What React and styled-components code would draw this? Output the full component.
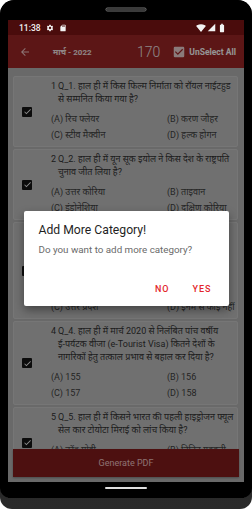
import React from "react";
import styled, { createGlobalStyle } from "styled-components";
import {
  MdArrowBack,
  MdCheckBox,
  MdCheck,
  MdSettings,
  MdSdCard,
  MdSignalWifi4Bar,
  MdSignalCellular4Bar,
  MdBatteryStd,
} from "react-icons/md";

const questions = [
  {
    no: 1,
    lines: ["Q_1. हाल ही में किस फिल्म निर्माता को रॉयल नाईटहुड", "से सम्मनित किया गया है?"],
    options: ["(A) रिच फ्लेयर", "(B) करण जौहर", "(C) स्टीव मैक्वीन", "(D) हल्क होगन"],
  },
  {
    no: 2,
    lines: ["Q_2. हाल ही में यून सूक इयोल ने किस देश के राष्ट्रपति", "चुनाव जीत लिया है?"],
    options: ["(A) उत्तर कोरिया", "(B) ताइवान", "(C) इंडोनेशिया", "(D) दक्षिण कोरिया"],
  },
  {
    no: 3,
    lines: [
      "Q_3. हाल ही में किस राज्य सरकार ने राज्य के सभी",
      "सरकारी विद्यालयों में छात्रों के लिए निःशुल्क",
      "डिजिटल शिक्षा योजना की शुरुआत की है, जिसका",
      "उद्देश्य ग्रामीण क्षेत्रों तक पहुँच बढ़ाना है?",
    ],
    options: ["(A) राजस्थान", "(B) मध्य प्रदेश", "(C) उत्तर प्रदेश", "(D) इनमें से कोई नहीं"],
  },
  {
    no: 4,
    lines: [
      "Q_4. हाल ही में मार्च 2020 से निलंबित पांच वर्षीय",
      "ई-पर्यटक वीजा (e-Tourist Visa) कितने देशों के",
      "नागरिकों हेतु तत्काल प्रभाव से बहाल कर दिया है?",
    ],
    options: ["(A) 155", "(B) 156", "(C) 157", "(D) 158"],
  },
  {
    no: 5,
    lines: ["Q_5. हाल ही में किसने भारत की पहली हाइड्रोजन फ्यूल", "सेल कार टोयोटा मिराई को लांच किया है?"],
    options: ["(A) नरेंद्र मोदी", "(B) नितिन गडकरी", "(C) पीयूष गोयल", "(D) अमित शाह"],
  },
];

const App = () => {
  return (
    <>
      <GlobalStyle />
      <Phone>
        <Front>
          <TopBezel>
            <Speaker />
          </TopBezel>
          <Screen>
            <StatusBar>
              <StatusLeft>
                <Clock>11:38</Clock>
                <MdSettings size={8} />
                <MdSdCard size={8} />
              </StatusLeft>
              <StatusRight>
                <MdSignalWifi4Bar size={10} />
                <MdSignalCellular4Bar size={9} />
                <MdBatteryStd size={10} />
              </StatusRight>
            </StatusBar>
            <Body>
              <AppBar>
                <BackButton>
                  <MdArrowBack size={12} />
                </BackButton>
                <Title>मार्च - 2022</Title>
                <Count>170</Count>
                <SelectAll>
                  <MdCheckBox size={14} />
                  <span>UnSelect All</span>
                </SelectAll>
              </AppBar>
              <List>
                {questions.map((q) => (
                  <Card key={q.no}>
                    <Tick>
                      <MdCheck size={9} />
                    </Tick>
                    <CardBody>
                      <Question>
                        <Num>{q.no}</Num>
                        <QText>
                          {q.lines.map((l) => (
                            <Line key={l}>{l}</Line>
                          ))}
                        </QText>
                      </Question>
                      <Options>
                        {q.options.map((o) => (
                          <Option key={o}>{o}</Option>
                        ))}
                      </Options>
                    </CardBody>
                  </Card>
                ))}
              </List>
              <Footer>
                <GenerateButton>Generate PDF</GenerateButton>
              </Footer>
              <Scrim>
                <Dialog>
                  <DialogTitle>Add More Category!</DialogTitle>
                  <DialogText>Do you want to add more category?</DialogText>
                  <DialogActions>
                    <TextButton>NO</TextButton>
                    <TextButton>YES</TextButton>
                  </DialogActions>
                </Dialog>
              </Scrim>
            </Body>
            <NavBar>
              <HomeIndicator />
            </NavBar>
          </Screen>
        </Front>
      </Phone>
    </>
  );
};

export default App;

const GlobalStyle = createGlobalStyle`
  html, body {
    margin: 0;
    padding: 0;
    background: #ffffff;
  }
  body {
    font-family: Roboto, "Noto Sans", "Noto Sans Devanagari", sans-serif;
  }
`;

const Phone = styled.div`
  width: 252px;
  height: 509px;
  background: linear-gradient(#1a1a1a, #2a2a2a);
  border-radius: 14px 14px 12px 12px;
  overflow: hidden;
`;

const Front = styled.div`
  height: 498px;
  background: #000;
  border-radius: 14px 14px 10px 10px;
  display: flex;
  flex-direction: column;
`;

const TopBezel = styled.div`
  height: 20px;
  display: flex;
  justify-content: center;
  padding-top: 8px;
  box-sizing: border-box;
`;

const Speaker = styled.div`
  width: 40px;
  height: 3px;
  border-radius: 2px;
  background: #3a3a3a;
  box-shadow: 0 0 0 0.5px #777;
`;

const Screen = styled.div`
  margin: 0 8px;
  flex: 1;
  display: flex;
  flex-direction: column;
  min-height: 0;
`;

const StatusBar = styled.div`
  height: 15px;
  background: #4a0c0c;
  color: #f2f2f2;
  display: flex;
  align-items: center;
  justify-content: space-between;
  padding: 0 17px 0 11px;
  flex-shrink: 0;
`;

const StatusLeft = styled.div`
  display: flex;
  align-items: center;
  gap: 5px;
`;

const Clock = styled.span`
  font-family: Roboto, sans-serif;
  font-size: 8.5px;
  font-weight: 500;
`;

const StatusRight = styled.div`
  display: flex;
  align-items: center;
  gap: 1px;
`;

const Body = styled.div`
  position: relative;
  flex: 1;
  display: flex;
  flex-direction: column;
  min-height: 0;
  background: #b6b6b6;
`;

const AppBar = styled.div`
  height: 33px;
  flex-shrink: 0;
  background: #9f2626;
  display: flex;
  align-items: center;
  padding: 0 8px 0 11px;
  color: #f3e4e4;
`;

const BackButton = styled.div`
  display: flex;
  color: #f1c8c8;
  width: 34px;
`;

const Title = styled.div`
  font-size: 8px;
  font-weight: 700;
  color: #f6e6e6;
  flex: 1;
`;

const Count = styled.div`
  font-family: Roboto, sans-serif;
  font-size: 14px;
  font-weight: 300;
  color: #f4e8e8;
  margin-right: 12px;
`;

const SelectAll = styled.div`
  display: flex;
  align-items: center;
  gap: 3px;
  font-family: Roboto, sans-serif;
  font-size: 8.5px;
  font-weight: 700;
  color: #ffffff;
  svg {
    color: #eed4d4;
  }
`;

const List = styled.div`
  flex: 1;
  min-height: 0;
  overflow: hidden;
  padding: 8px 6px 0 5px;
  display: flex;
  flex-direction: column;
  gap: 2px;
`;

const Card = styled.div`
  flex-shrink: 0;
  background: #c2c2c2;
  border: 0.5px solid #cbcbcb;
  border-radius: 2px;
  padding: 3px 6px 3px 8px;
  display: flex;
  align-items: center;
`;

const Tick = styled.div`
  width: 10px;
  height: 10px;
  border-radius: 1px;
  background: #161616;
  color: #f2f2f2;
  display: flex;
  align-items: center;
  justify-content: center;
  flex-shrink: 0;
  margin-right: 19px;
`;

const CardBody = styled.div`
  flex: 1;
  min-width: 0;
`;

const Question = styled.div`
  display: flex;
  font-size: 9px;
  line-height: 13px;
  color: #333333;
`;

const Num = styled.span`
  width: 7px;
  flex-shrink: 0;
`;

const QText = styled.div`
  min-width: 0;
`;

const Line = styled.div`
  white-space: nowrap;
`;

const Options = styled.div`
  display: grid;
  grid-template-columns: 116px 1fr;
  margin-top: 5px;
`;

const Option = styled.div`
  font-size: 9px;
  line-height: 16px;
  color: #404040;
  white-space: nowrap;
`;

const Footer = styled.div`
  flex-shrink: 0;
  padding: 0 5px 5px;
`;

const GenerateButton = styled.div`
  height: 28px;
  background: #861c1c;
  color: #f0c4c4;
  font-family: Roboto, sans-serif;
  font-size: 9px;
  display: flex;
  align-items: center;
  justify-content: center;
  box-shadow: 0 1px 2px rgba(0, 0, 0, 0.3);
`;

const Scrim = styled.div`
  position: absolute;
  inset: 0;
  background: rgba(0, 0, 0, 0.42);
  display: flex;
  align-items: center;
  justify-content: center;
`;

const Dialog = styled.div`
  width: 205px;
  height: 95px;
  box-sizing: border-box;
  background: #ffffff;
  border-radius: 2px;
  box-shadow: 0 4px 10px rgba(0, 0, 0, 0.4);
  padding: 11px 17px 10px 15px;
  display: flex;
  flex-direction: column;
  font-family: Roboto, sans-serif;
`;

const DialogTitle = styled.div`
  font-size: 12.2px;
  line-height: 16px;
  color: #1f1f1f;
`;

const DialogText = styled.div`
  font-size: 9.8px;
  line-height: 14px;
  margin-top: 5px;
  color: #6a6a6a;
`;

const DialogActions = styled.div`
  margin-top: auto;
  display: flex;
  justify-content: flex-end;
  gap: 23px;
`;

const TextButton = styled.span`
  font-size: 9px;
  font-weight: 500;
  letter-spacing: 1px;
  line-height: 14px;
  color: #e3262b;
`;

const NavBar = styled.div`
  height: 16px;
  flex-shrink: 0;
  background: #000;
  display: flex;
  justify-content: center;
  padding-top: 5px;
  box-sizing: border-box;
`;

const HomeIndicator = styled.div`
  width: 42px;
  height: 2px;
  border-radius: 1px;
  background: #e0e0e0;
`;
